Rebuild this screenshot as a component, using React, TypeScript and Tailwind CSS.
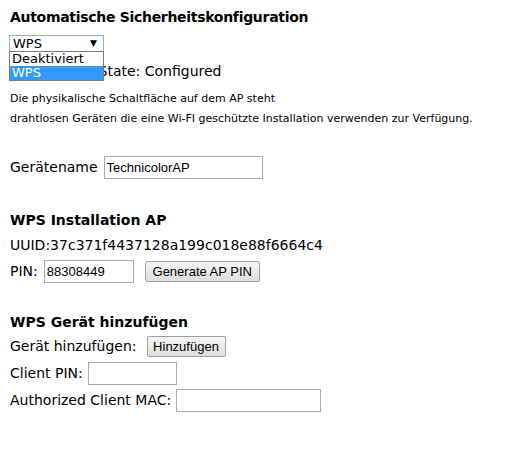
import { useState } from "react";

const verdana = { fontFamily: '"DejaVu Sans", Verdana, sans-serif' };

function Field(props: { value?: string; width: string }) {
  return (
    <input
      type="text"
      defaultValue={props.value}
      className={`h-[23px] border border-[#a9a9a9] bg-white px-[2px] text-[13px] text-black outline-none font-['Liberation_Sans',Arial,sans-serif] ${props.width}`}
    />
  );
}

function Knopf(props: { label: string; width: string }) {
  return (
    <button
      className={`h-[21px] rounded-[2px] border border-[#a0a0a0] bg-gradient-to-b from-[#f6f6f6] to-[#dedede] text-[13px] text-black font-['Liberation_Sans',Arial,sans-serif] ${props.width}`}
    >
      {props.label}
    </button>
  );
}

export default function App() {
  const [modus, setModus] = useState("WPS");

  return (
    <div className="min-h-screen bg-white pl-[10px] pt-[8px] text-[14px] text-black" style={verdana}>
      <h2 className="text-[14px] font-bold leading-[19px] tracking-[-0.3px]">Automatische Sicherheitskonfiguration</h2>

      {/* Auswahl mit geöffneter Liste */}
      <div className="relative mt-[8px]">
        <div className="-ml-[1px] flex h-[17px] w-[95px] items-center justify-between border border-[#7eb4ea] bg-white pl-[3px] pr-[6px] text-[13px] leading-none">
          <span>{modus}</span>
          <span className="text-[9px]">▼</span>
        </div>
        <div className="absolute left-[-1px] top-[16px] z-10 w-[95px] border border-[#7a7a7a] bg-white text-[13px] leading-[14px]">
          {["Deaktiviert", "WPS"].map((o) => (
            <div
              key={o}
              onClick={() => setModus(o)}
              className={`px-[2px] ${o === modus ? "bg-[#3399ff] text-white" : ""}`}
            >
              {o}
            </div>
          ))}
        </div>
        <div className="mt-[11px] leading-[17px]">Aktuell WPS State: Configured</div>
      </div>

      <p className="mt-[9px] text-[11px] leading-[20px]">Die physikalische Schaltfläche auf dem AP steht</p>
      <p className="text-[11px] leading-[20px]">
        drahtlosen Geräten die eine Wi-FI geschützte Installation verwenden zur Verfügung.
      </p>

      <div className="mt-[27px] flex items-center gap-[6px]">
        <span>Gerätename</span>
        <Field value="TechnicolorAP" width="w-[159px]" />
      </div>

      <h3 className="mt-[32px] text-[14px] font-bold leading-[18px]">WPS Installation AP</h3>
      <div className="mt-[7px] leading-[18px]">UUID:37c371f4437128a199c018e88f6664c4</div>
      <div className="mt-[6px] flex items-center">
        <span>PIN:</span>
        <span className="ml-[6px]">
          <Field value="88308449" width="w-[90px]" />
        </span>
        <span className="ml-[11px]">
          <Knopf label="Generate AP PIN" width="w-[115px]" />
        </span>
      </div>

      <h3 className="mt-[30px] text-[14px] font-bold leading-[18px]">WPS Gerät hinzufügen</h3>
      <div className="mt-[5px] flex items-center gap-[10px]">
        <span>Gerät hinzufügen:</span>
        <Knopf label="Hinzufügen" width="w-[79px]" />
      </div>
      <div className="mt-[5px] flex items-center gap-[5px]">
        <span>Client PIN:</span>
        <Field width="w-[89px]" />
      </div>
      <div className="mt-[4px] flex items-center gap-[5px]">
        <span>Authorized Client MAC:</span>
        <Field width="w-[145px]" />
      </div>
    </div>
  );
}
